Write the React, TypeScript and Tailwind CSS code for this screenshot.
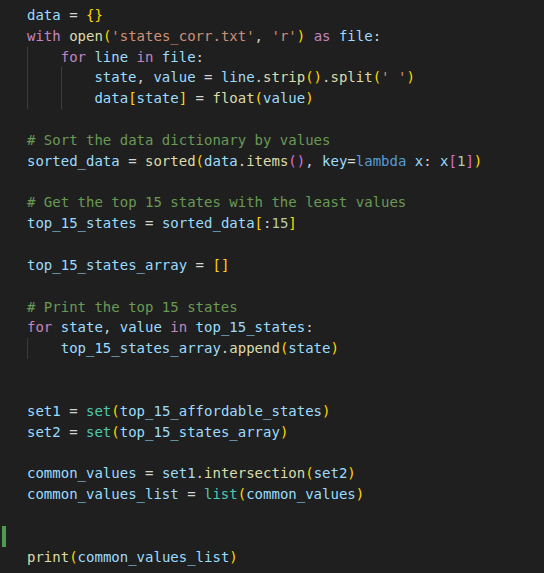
type Tok = [string, string];

const c = {
  v: "text-[#9cdcfe]",
  p: "text-[#d4d4d4]",
  k: "text-[#c586c0]",
  f: "text-[#dcdcaa]",
  s: "text-[#ce9178]",
  m: "text-[#6a9955]",
  t: "text-[#4ec9b0]",
  b: "text-[#569cd6]",
  n: "text-[#b5cea8]",
  y: "text-[#ffd700]",
  r: "text-[#da70d6]",
};

type Line = { indent: number; toks: Tok[]; mark?: boolean };

const lines: Line[] = [
  { indent: 0, toks: [["data", c.v], [" = ", c.p], ["{}", c.y]] },
  {
    indent: 0,
    toks: [
      ["with ", c.k], ["open", c.f], ["(", c.y], ["'states_corr.txt'", c.s], [", ", c.p],
      ["'r'", c.s], [")", c.y], [" as ", c.k], ["file", c.v], [":", c.p],
    ],
  },
  { indent: 1, toks: [["for ", c.k], ["line", c.v], [" in ", c.k], ["file", c.v], [":", c.p]] },
  {
    indent: 2,
    toks: [
      ["state", c.v], [", ", c.p], ["value", c.v], [" = ", c.p], ["line", c.v], [".", c.p],
      ["strip", c.f], ["()", c.y], [".", c.p], ["split", c.f], ["(", c.y], ["' '", c.s], [")", c.y],
    ],
  },
  {
    indent: 2,
    toks: [
      ["data", c.v], ["[", c.y], ["state", c.v], ["]", c.y], [" = ", c.p], ["float", c.f],
      ["(", c.y], ["value", c.v], [")", c.y],
    ],
  },
  { indent: 0, toks: [] },
  { indent: 0, toks: [["# Sort the data dictionary by values", c.m]] },
  {
    indent: 0,
    toks: [
      ["sorted_data", c.v], [" = ", c.p], ["sorted", c.f], ["(", c.y], ["data", c.v], [".", c.p],
      ["items", c.f], ["()", c.r], [", ", c.p], ["key", c.v], ["=", c.p], ["lambda", c.b],
      [" x", c.v], [": ", c.p], ["x", c.v], ["[", c.r], ["1", c.n], ["]", c.r], [")", c.y],
    ],
  },
  { indent: 0, toks: [] },
  { indent: 0, toks: [["# Get the top 15 states with the least values", c.m]] },
  {
    indent: 0,
    toks: [
      ["top_15_states", c.v], [" = ", c.p], ["sorted_data", c.v], ["[", c.y], [":", c.p],
      ["15", c.n], ["]", c.y],
    ],
  },
  { indent: 0, toks: [] },
  { indent: 0, toks: [["top_15_states_array", c.v], [" = ", c.p], ["[]", c.y]] },
  { indent: 0, toks: [] },
  { indent: 0, toks: [["# Print the top 15 states", c.m]] },
  {
    indent: 0,
    toks: [
      ["for ", c.k], ["state", c.v], [", ", c.p], ["value", c.v], [" in ", c.k],
      ["top_15_states", c.v], [":", c.p],
    ],
  },
  {
    indent: 1,
    toks: [
      ["top_15_states_array", c.v], [".", c.p], ["append", c.f], ["(", c.y], ["state", c.v],
      [")", c.y],
    ],
  },
  { indent: 0, toks: [] },
  { indent: 0, toks: [] },
  {
    indent: 0,
    toks: [
      ["set1", c.v], [" = ", c.p], ["set", c.t], ["(", c.y], ["top_15_affordable_states", c.v],
      [")", c.y],
    ],
  },
  {
    indent: 0,
    toks: [
      ["set2", c.v], [" = ", c.p], ["set", c.t], ["(", c.y], ["top_15_states_array", c.v],
      [")", c.y],
    ],
  },
  { indent: 0, toks: [] },
  {
    indent: 0,
    toks: [
      ["common_values", c.v], [" = ", c.p], ["set1", c.v], [".", c.p], ["intersection", c.f],
      ["(", c.y], ["set2", c.v], [")", c.y],
    ],
  },
  {
    indent: 0,
    toks: [
      ["common_values_list", c.v], [" = ", c.p], ["list", c.t], ["(", c.y],
      ["common_values", c.v], [")", c.y],
    ],
  },
  { indent: 0, toks: [] },
  { indent: 0, toks: [], mark: true },
  { indent: 0, toks: [["print", c.f], ["(", c.y], ["common_values_list", c.v], [")", c.y]] },
];

export default function App() {
  return (
    <div className="w-[544px] h-[573px] overflow-hidden bg-[#1f1f1f] pt-[5px] font-['DejaVu_Sans_Mono',monospace] text-[14px] leading-[20.83px]">
      {lines.map((line, i) => (
        <div key={i} className="flex h-[20.83px]">
          <div className="w-[27px] shrink-0 pl-[2px]">
            {line.mark && <div className="w-[4px] h-full bg-[#4f9a4f]" />}
          </div>
          {Array.from({ length: line.indent }).map((_, j) => (
            <span key={j} className="w-[4ch] shrink-0 border-l border-[#3c3c3c]" />
          ))}
          <span className="whitespace-pre">
            {line.toks.map(([t, cls], j) => (
              <span key={j} className={cls}>
                {t}
              </span>
            ))}
          </span>
        </div>
      ))}
    </div>
  );
}
